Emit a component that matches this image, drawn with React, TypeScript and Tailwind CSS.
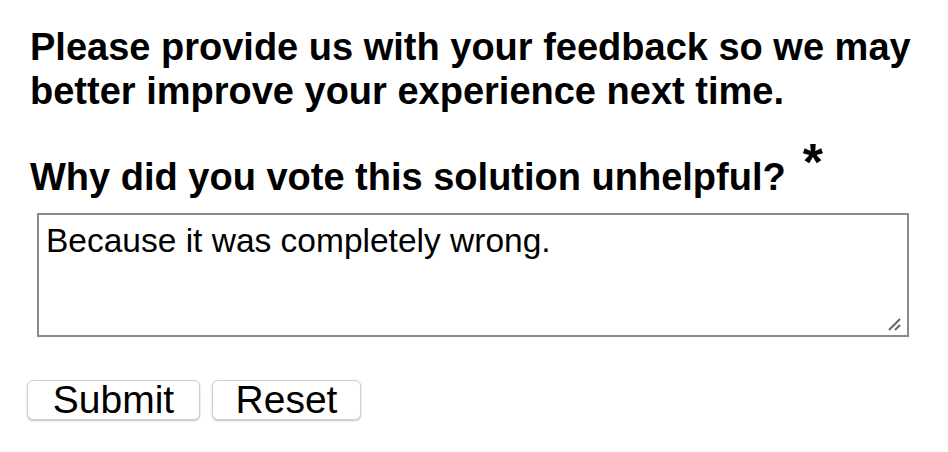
export default function App() {
  return (
    <div className="w-[948px] h-[452px] bg-white text-black font-['Liberation_Sans',Arial,sans-serif]">
      <div className="pl-[30px] pt-[25px]">
        <p className="w-[890px] text-[38px] font-bold leading-[44px]">
          Please provide us with your feedback so we may better improve your experience next time.
        </p>
        <div className="mt-[42px] flex items-start">
          <p className="text-[38px] font-bold leading-[44px]">Why did you vote this solution unhelpful?</p>
          <span className="ml-[17px] -mt-[15px] text-[52px] font-bold leading-[44px]">*</span>
        </div>
      </div>
      <div className="pl-[37px] pr-[39px] pt-[14px]">
        <div className="relative h-[124px] border-2 border-[#8a8a8a]">
          <p className="pl-[7px] pt-[7px] text-[33.5px] leading-[38px]">Because it was completely wrong.</p>
          <svg className="absolute right-[5px] bottom-[2px]" width="16" height="16" viewBox="0 0 16 16">
            <path d="M14 2 L3 13 M14 8 L9 13" stroke="#666" strokeWidth="2" />
          </svg>
        </div>
      </div>
      <div className="pl-[27px] pt-[43px] flex gap-[12px]">
        <button className="w-[173px] h-[40px] rounded-[6px] border border-[#cfcfcf] bg-white shadow-[0_1px_2px_rgba(0,0,0,0.25)] text-[39px] leading-[36px]">
          Submit
        </button>
        <button className="w-[149px] h-[40px] rounded-[6px] border border-[#cfcfcf] bg-white shadow-[0_1px_2px_rgba(0,0,0,0.25)] text-[39px] leading-[36px]">
          Reset
        </button>
      </div>
    </div>
  );
}
